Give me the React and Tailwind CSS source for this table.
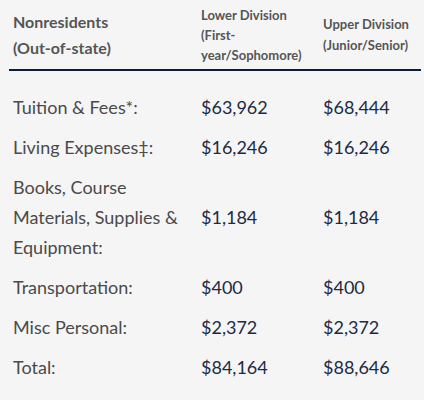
export default function App() {
  const rows = [
    { label: 'Tuition & Fees*:', lower: '$63,962', upper: '$68,444' },
    { label: 'Living Expenses‡:', lower: '$16,246', upper: '$16,246' },
    { label: 'Books, Course Materials, Supplies & Equipment:', lower: '$1,184', upper: '$1,184' },
    { label: 'Transportation:', lower: '$400', upper: '$400' },
    { label: 'Misc Personal:', lower: '$2,372', upper: '$2,372' },
    { label: 'Total:', lower: '$84,164', upper: '$88,646' },
  ];

  return (
    <div className="w-[424px] h-[400px] bg-[#f5f5f6] overflow-hidden" style={{ fontFamily: 'Lato, "Noto Sans", sans-serif' }}>
      <table className="ml-[9px] w-[412px] border-collapse table-fixed">
        <colgroup>
          <col className="w-[188px]" />
          <col className="w-[122px]" />
          <col className="w-[102px]" />
        </colgroup>
        <thead>
          <tr className="h-[70px] border-b-2 border-[#0c1e33] align-middle">
            <th className="pl-1 text-left font-bold text-[16px] leading-[26px] text-[#555555]">
              Nonresidents
              <br />
              (Out-of-state)
            </th>
            <th className="pl-1 text-left font-bold text-[13px] leading-[20px] text-[#555555]">
              Lower Division (First-year/Sophomore)
            </th>
            <th className="pl-1 text-left font-bold text-[13px] leading-[21px] text-[#555555]">
              Upper Division (Junior/Senior)
            </th>
          </tr>
        </thead>
        <tbody>
          <tr className="h-[17px]">
            <td colSpan={3}></td>
          </tr>
          {rows.map((row) => (
            <tr key={row.label} className="align-middle">
              <td className="pl-1 py-[5px] text-[18px] leading-[30px] text-[#4a4a4a]">{row.label}</td>
              <td className="pl-1 py-[5px] text-[18px] leading-[30px] text-[#1c2b42]">{row.lower}</td>
              <td className="pl-1 py-[5px] text-[18px] leading-[30px] text-[#1c2b42]">{row.upper}</td>
            </tr>
          ))}
        </tbody>
      </table>
    </div>
  );
}
